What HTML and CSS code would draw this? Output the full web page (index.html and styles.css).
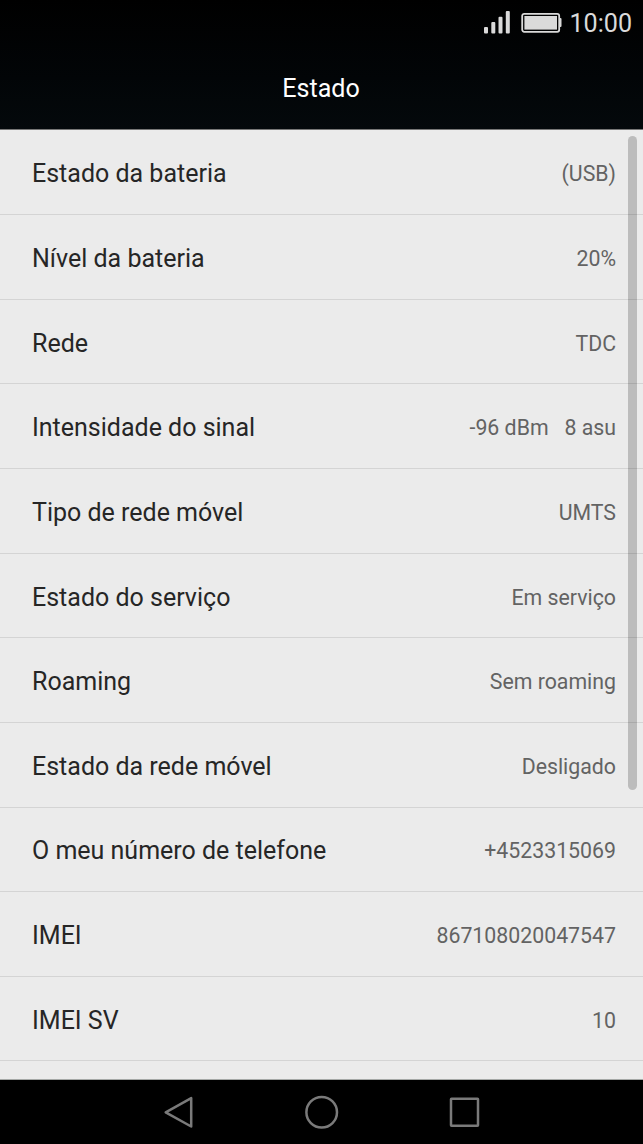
FILE: index.html
```html
<!DOCTYPE html>
<html lang="pt">
<head>
<meta charset="utf-8">
<title>Estado</title>
<link rel="stylesheet" href="styles.css">
</head>
<body>
<div class="screen">
  <header class="header">
    <div class="status">
      <svg class="signal" width="28" height="24" viewBox="0 0 28 24" fill="#dadada"><rect x="1" y="16" width="4" height="6.5" rx="1"/><rect x="8.3" y="11" width="4" height="11.5" rx="1"/><rect x="15.5" y="5.8" width="4" height="16.7" rx="1"/><rect x="22.8" y="0" width="4" height="22.5" rx="1"/></svg>
      <svg class="battery" width="42" height="24" viewBox="0 0 42 24"><rect x="1.2" y="2.8" width="37" height="18" rx="2" fill="none" stroke="#dadada" stroke-width="1.8"/><rect x="3.4" y="5" width="32.6" height="13.6" fill="#dadada"/><path d="M38.5 7h1q1 0 1 1v7q0 1-1 1h-1z" fill="#dadada"/></svg>
      <span class="clock">10:00</span>
    </div>
    <h1 class="title">Estado</h1>
  </header>
  <main class="list">
    <div class="row"><span class="label">Estado da bateria</span><span class="value">(USB)</span></div>
    <div class="row"><span class="label">Nível da bateria</span><span class="value">20%</span></div>
    <div class="row"><span class="label">Rede</span><span class="value">TDC</span></div>
    <div class="row"><span class="label">Intensidade do sinal</span><span class="value">-96 dBm   8 asu</span></div>
    <div class="row"><span class="label">Tipo de rede móvel</span><span class="value">UMTS</span></div>
    <div class="row"><span class="label">Estado do serviço</span><span class="value">Em serviço</span></div>
    <div class="row"><span class="label">Roaming</span><span class="value">Sem roaming</span></div>
    <div class="row"><span class="label">Estado da rede móvel</span><span class="value">Desligado</span></div>
    <div class="row"><span class="label">O meu número de telefone</span><span class="value">+4523315069</span></div>
    <div class="row"><span class="label">IMEI</span><span class="value">867108020047547</span></div>
    <div class="row"><span class="label">IMEI SV</span><span class="value">10</span></div>
    <div class="scrollbar"></div>
  </main>
  <nav class="nav">
    <svg width="36" height="36" viewBox="0 0 36 36"><path d="M30.2 4.1V32.5L4.7 18.3Z"/></svg>
    <svg width="36" height="36" viewBox="0 0 36 36"><circle cx="17.7" cy="18.3" r="15.3"/></svg>
    <svg width="36" height="36" viewBox="0 0 36 36"><rect x="4" y="4.7" width="27" height="27" rx=".5"/></svg>
  </nav>
</div>
</body>
</html>
```
FILE: styles.css
```css
body { margin: 0; background: #000; font-family: Roboto, sans-serif; }
.screen { width: 643px; height: 1144px; display: flex; flex-direction: column; overflow: hidden; }
.header { height: 130px; flex: none; box-sizing: border-box; background: linear-gradient(#000, #020507 60%, #04090c); border-bottom: 1px solid #777; }
.status { display: flex; justify-content: flex-end; align-items: center; height: 46px; padding-right: 11px; color: #dadada; }
.signal { margin-right: 9.5px; }
.battery { margin-right: 7px; }
.clock { padding-top: 1px; font-size: 25.1px; }
.title { margin: 26px 1px 0 0; font-size: 25.1px; line-height: 34px; font-weight: 400; color: #fff; text-align: center; }
.list { position: relative; flex: 1; overflow: hidden; box-sizing: border-box; padding-top: .5px; background: #ebebeb; border-bottom: 1px solid #a5a8a6; }
.row { height: 84.63px; box-sizing: border-box; border-bottom: 1px solid #d4d4d4; display: flex; align-items: center; justify-content: space-between; padding: 3.2px 27px 0 32px; }
.label { font-size: 25px; color: #262626; }
.value { font-size: 21.3px; color: #636363; white-space: pre; }
.scrollbar { position: absolute; top: 6px; right: 6px; width: 9.5px; height: 654px; border-radius: 5px; background: rgba(0, 0, 0, .2); }
.nav { height: 64px; flex: none; display: flex; justify-content: center; align-items: center; gap: 107px; background: #000; }
.nav svg { fill: none; stroke: #7a7a7a; stroke-width: 2.5; stroke-linejoin: round; }
```
